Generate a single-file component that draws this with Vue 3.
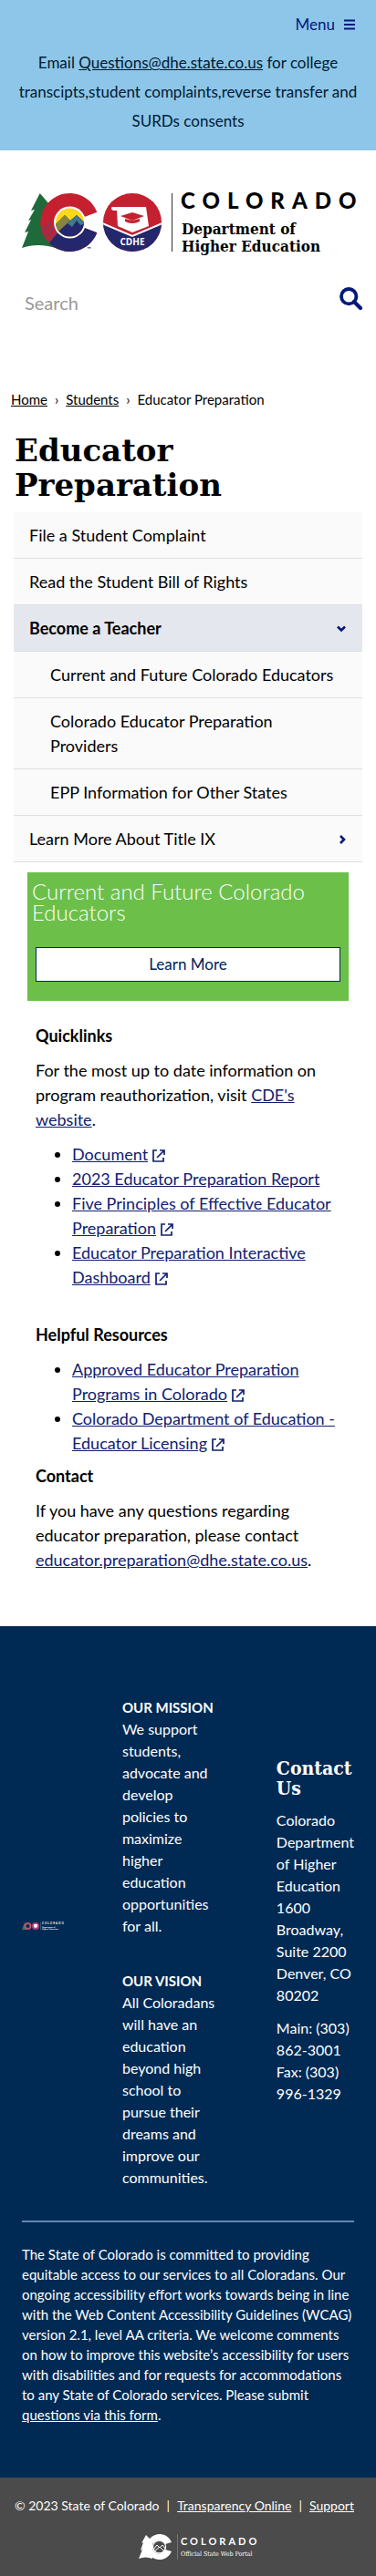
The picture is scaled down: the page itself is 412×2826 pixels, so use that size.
<script setup>
const quick = [
  { lead: '', last: 'Document', ext: true },
  { lead: '2023 Educator Preparation', last: 'Report', ext: false },
  { lead: 'Five Principles of Effective Educator', last: 'Preparation', ext: true },
  { lead: 'Educator Preparation Interactive', last: 'Dashboard', ext: true },
]
const resources = [
  { lead: 'Approved Educator Preparation Programs in', last: 'Colorado', ext: true },
  { lead: 'Colorado Department of Education - Educator', last: 'Licensing', ext: true },
]
const lists = { quick, resources }
</script>

<template>
  <div class="page">
    <header>
      <div class="banner">
        <button class="menu" type="button">
          Menu
          <svg width="12" height="12" viewBox="0 0 12 12" aria-hidden="true"><path d="M0 1.500h12M0 6h12M0 10.500h12" stroke="currentColor" stroke-width="2" /></svg>
        </button>
        <p>Email <a href="#">Questions@dhe.state.co.us</a> for college transcipts,student complaints,reverse transfer and SURDs consents</p>
      </div>
      <a class="brand" href="#" aria-label="Colorado Department of Higher Education">
        <svg viewBox="0 0 364 66">
          <defs>
            <clipPath id="seal"><circle cx="121" cy="33" r="32" /></clipPath>
            <clipPath id="cshape"><path d="M82.300 21.700A32 32 0 1 0 82.300 44.300L68.500 39A17 17 0 1 1 68.500 27Z" /></clipPath>
            <clipPath id="sun"><circle cx="52.500" cy="33" r="15.500" /></clipPath>
          </defs>
          <g>
            <path d="M19.700 1L10 20l4-1L7 31l3-1L3 44l4-1L0 61c12-4 25-4 40 1L36 20Z" fill="#1f6a3b" />
            <g clip-path="url(#cshape)">
              <rect x="18" width="66" height="66" fill="#c5202f" />
              <path d="M22 66L43 39h45v27Z" fill="#24276b" />
              <path d="M18 48l14-15M20 54l19-20M24 59l21-23" stroke="#8c3557" stroke-width="3" />
            </g>
            <circle cx="52.500" cy="33" r="17.500" fill="#fff" />
            <g clip-path="url(#sun)">
              <rect x="36" y="16" width="34" height="34" fill="#ffd71b" />
              <path d="M34 38l13-13 6 6 7-6 13 12v14H34Z" fill="#24276b" />
              <path d="M34 38l13-13 6 6-13 12Z" fill="#85853f" />
              <path d="M50 34l10-9 9 9-5 2-4-5-5 7Z" fill="#3e7b8d" />
            </g>
          </g>
          <g clip-path="url(#seal)">
            <rect x="88" width="66" height="66" fill="#c5202f" />
            <path d="M88 34l33 14 33-14v32H88Z" fill="#24276b" />
            <path d="M88 34l33 14 33-14" fill="none" stroke="#fff" stroke-width="2" />
          </g>
          <path d="M99 16h37l3 21-18 7-16-7-1-17h-3c-3 0-4-3-2-4Z" fill="#fff" />
          <path d="M108 26l13-4 13 4-13 5Z" fill="#c5202f" />
          <path d="M113 29l8 2 8-2v3q-8 4-16 0Z" fill="#c5202f" />
          <text class="seal-text" x="121" y="58" text-anchor="middle">CDHE</text>
          <text class="tm" x="71" y="64">™</text>
          <path d="M164.500 1v64" stroke="#333" />
          <text class="word" x="174" y="18">COLORADO</text>
          <text class="slab" x="175" y="46">Department of</text>
          <text class="slab" x="175" y="65">Higher Education</text>
        </svg>
      </a>
      <form class="search" @submit.prevent>
        <input type="search" placeholder="Search" aria-label="Search" />
        <button type="submit" aria-label="Submit search">
          <svg width="25" height="25" viewBox="0 0 25 25" fill="none" stroke="currentColor"><circle cx="10.200" cy="10.200" r="8.200" stroke-width="3.800" /><path d="M16 16l7 7" stroke-width="4.200" stroke-linecap="round" /></svg>
        </button>
      </form>
    </header>

    <main>
      <nav class="crumbs" aria-label="Breadcrumb">
        <a href="#">Home</a><span>›</span><a href="#">Students</a><span>›</span>Educator Preparation
      </nav>
      <h1>Educator<br />Preparation</h1>
      <nav class="side" aria-label="Section">
        <a href="#">File a Student Complaint</a>
        <a href="#">Read the Student Bill of Rights</a>
        <a href="#" class="on">Become a Teacher
          <svg width="10" height="8" viewBox="0 0 10 8"><path d="M1 1.500l4 4 4-4" fill="none" stroke="currentColor" stroke-width="2.600" /></svg>
        </a>
        <a href="#" class="sub">Current and Future Colorado Educators</a>
        <a href="#" class="sub two">Colorado Educator Preparation Providers</a>
        <a href="#" class="sub">EPP Information for Other States</a>
        <a href="#">Learn More About Title IX
          <svg width="8" height="10" viewBox="0 0 8 10"><path d="M2 1l4 4-4 4" fill="none" stroke="currentColor" stroke-width="2.600" /></svg>
        </a>
      </nav>
      <section class="promo">
        <h2>Current and Future Colorado Educators</h2>
        <a href="#">Learn More</a>
      </section>
      <article>
        <h3>Quicklinks</h3>
        <p>For the most up to date information on program reauthorization, visit <a href="#">CDE's website</a>.</p>
        <template v-for="(items, key) in lists" :key="key">
          <h3 v-if="key === 'resources'" class="second">Helpful Resources</h3>
          <ul>
            <li v-for="item in items" :key="item.last">
              <a href="#">{{ item.lead }} <span class="tail">{{ item.last }}<svg v-if="item.ext" width="14" height="14" viewBox="0 0 14 14" fill="none" stroke="currentColor" stroke-width="1.700" aria-hidden="true"><path d="M5 1H1v12h11V9M5 9l7.500-7.500M8 1h5v5" /></svg></span></a>
            </li>
          </ul>
        </template>
        <h3>Contact</h3>
        <p>If you have any questions regarding educator preparation, please contact <a href="#">educator.preparation@dhe.state.co.us</a>.</p>
      </article>
    </main>

    <footer>
      <div class="info">
        <div class="cols">
          <svg class="mini" viewBox="0 0 46 10" role="img" aria-label="Colorado Department of Higher Education">
            <path d="M3 1l-3 8h5Z" fill="#3d7655" />
            <circle cx="6.500" cy="5" r="3" fill="none" stroke="#bd526f" stroke-width="2" />
            <circle cx="15" cy="5" r="4" fill="#b73f77" /><path d="M13 3h4v3l-2 1-2-1Z" fill="#fff" />
            <path d="M20.500 1v8" stroke="#6d819d" stroke-width=".5" />
            <text class="mini-word" x="22" y="3.500">COLORADO</text>
            <text class="mini-slab" x="22" y="6.700">Department of</text>
            <text class="mini-slab" x="22" y="9.300">Higher Education</text>
          </svg>
          <div class="mission">
            <p><strong>OUR MISSION</strong><br />We support students, advocate and develop policies to maximize higher education opportunities for all.</p>
            <p><strong>OUR VISION</strong><br />All Coloradans will have an education beyond high school to pursue their dreams and improve our communities.</p>
          </div>
          <address>
            <h2>Contact Us</h2>
            <p>Colorado Department of Higher Education<br />1600 Broadway, Suite 2200<br />Denver, CO 80202</p>
            <p>Main: (303) 862-3001<br />Fax: (303) 996-1329</p>
          </address>
        </div>
        <hr />
        <p class="legal">The State of Colorado is committed to providing equitable access to our services to all Coloradans. Our ongoing accessibility effort works towards being in line with the Web Content Accessibility Guidelines (WCAG) version 2.1, level AA criteria. We welcome comments on how to improve this website’s accessibility for users with disabilities and for requests for accommodations to any State of Colorado services. Please submit <a href="#">questions via this form</a>.</p>
      </div>
      <div class="bottom">
        <p><span>© 2023 State of Colorado</span><span>|</span><a href="#">Transparency Online</a><span>|</span><a href="#">Support</a></p>
        <svg width="164" height="28" viewBox="-28 0 164 28" role="img" aria-label="Colorado Official State Web Portal">
          <path d="M8 1L3 10l2-1-3 9 2-1-4 10c5-2 10-2 15 0V8Z" fill="#fff" />
          <path d="M36 9A14 14 0 1 0 36 19L29 17A7.500 7.500 0 1 1 29 11Z" fill="#fff" />
          <circle cx="22.500" cy="14" r="7" fill="#4b4b4b" stroke="#fff" stroke-width="1.300" />
          <path d="M16 17l4-5 3 3 3-3 3 4M17 19l6-5 5 5" fill="none" stroke="#fff" />
          <path d="M42.500 0v28" stroke="#777" />
          <text class="portal-word" x="46" y="12">COLORADO</text>
          <text class="portal-slab" x="46" y="24">Official State Web Portal</text>
        </svg>
      </div>
    </footer>
  </div>
</template>

<style>
body { margin: 0; background: #fff; }
</style>

<style scoped>
.page { font: 18px/27px Lato, "Open Sans", sans-serif; color: #000; }
a { color: inherit; }
p, h1, h2, h3 { margin: 0; }
button { border: 0; padding: 0; background: none; color: #00197a; font: inherit; cursor: pointer; }
svg { overflow: visible; }
.banner { background: #8dc6e8; padding: 13px 20px 16px; }
.menu { display: flex; align-items: center; gap: 10px; margin: 0 3px 13px auto; font-size: 17px; }
.banner p { color: #001a33; text-align: center; font-size: 17px; line-height: 32px; }
.brand { display: block; margin: 46px 24px 0; }
.brand svg { display: block; width: 100%; }
.word { font: 900 24px Lato, sans-serif; letter-spacing: 8px; }
.slab { font: 700 17px "DejaVu Serif Condensed", "DejaVu Serif", serif; }
.seal-text { font: 700 10px "Open Sans", sans-serif; fill: #fff; }
.tm { font: 6px Lato, sans-serif; }
.search { display: flex; align-items: center; justify-content: space-between; margin: 30px 15px 0 27px; }
.search input { flex: 1; min-width: 0; border: 0; outline: 0; padding: 10px 0 0; font: 20px/30px Lato, sans-serif; background: none; }
.search input::placeholder { color: #999; opacity: 1; }
.search svg { display: block; }
.crumbs { margin: 78px 12px 0; font-size: 15px; }
.crumbs span { margin: 0 8px; }
h1 { margin: 23px 16px 0; font: 700 34px/38px "DejaVu Serif", serif; }
.side { margin: 11px 15px 0; }
.side a { display: flex; align-items: center; justify-content: space-between; padding: 12px 17px 11px; border-bottom: 1px solid #dfe0e3; background: #fafafa; text-decoration: none; }
.side svg { color: #00197a; margin-right: 1px; }
.side .on { background: #e5e7ee; font-weight: 700; }
.side .sub { padding-left: 40px; padding-right: 8px; }
.side .two { padding-right: 60px; }
.promo { margin: 11px 30px 0; padding: 9px 9px 21px; background: #6cc04a; }
.promo h2 { margin: 0 -4px; color: #fff; font: 300 24px/23px Lato, sans-serif; }
.promo a { display: block; margin-top: 27px; border: 1px solid #002a5c; background: #fff; color: #00205b; text-align: center; font-size: 17px; line-height: 36px; text-decoration: none; }
article { padding: 25px 39px 48px; }
article h3 { font-size: 18px; }
article p { margin: 11px 0; }
article a { color: #10206f; }
ul { margin: 11px 0 9px; padding-left: 40px; }
.tail { white-space: nowrap; }
.tail svg { margin-left: 5px; vertical-align: -2px; }
article .second { margin-top: 36px; }
.info { padding: 77px 24px 58px; background: #002a54; color: #fff; }
.cols { display: grid; grid-template-columns: 46fr 105fr 85fr; gap: 64px; align-items: center; font-size: 16px; line-height: 24px; }
.mini { width: 100%; margin-bottom: 36px; fill: #fff; }
.mini-word { font: 700 3px Lato, sans-serif; letter-spacing: 1px; }
.mini-slab { font: 700 2px "DejaVu Serif Condensed", serif; }
.mission p + p { margin-top: 36px; }
.mission strong { font-size: 15px; white-space: nowrap; }
address { padding-bottom: 12px; font-style: normal; }
address h2 { font: 700 21px/22px "DejaVu Serif Condensed", "DejaVu Serif", serif; margin-bottom: 12px; }
address p { margin-bottom: 12px; }
hr { margin: 35px 0 24px; border: 0; border-top: 2px solid #6488b4; }
.legal { font-size: 15px; line-height: 22px; }
.bottom { padding: 19px 16px 18px; background: #4b4b4b; color: #fff; text-align: center; }
.bottom p { display: flex; justify-content: space-between; padding: 0 8px 0 0; font-size: 14px; line-height: 24px; white-space: nowrap; }
.bottom svg { display: block; margin: 19px auto 0; fill: #fff; }
.portal-word { font: 700 11px Lato, sans-serif; letter-spacing: 3px; }
.portal-slab { font: 400 7px "DejaVu Serif Condensed", "DejaVu Serif", serif; }
</style>
